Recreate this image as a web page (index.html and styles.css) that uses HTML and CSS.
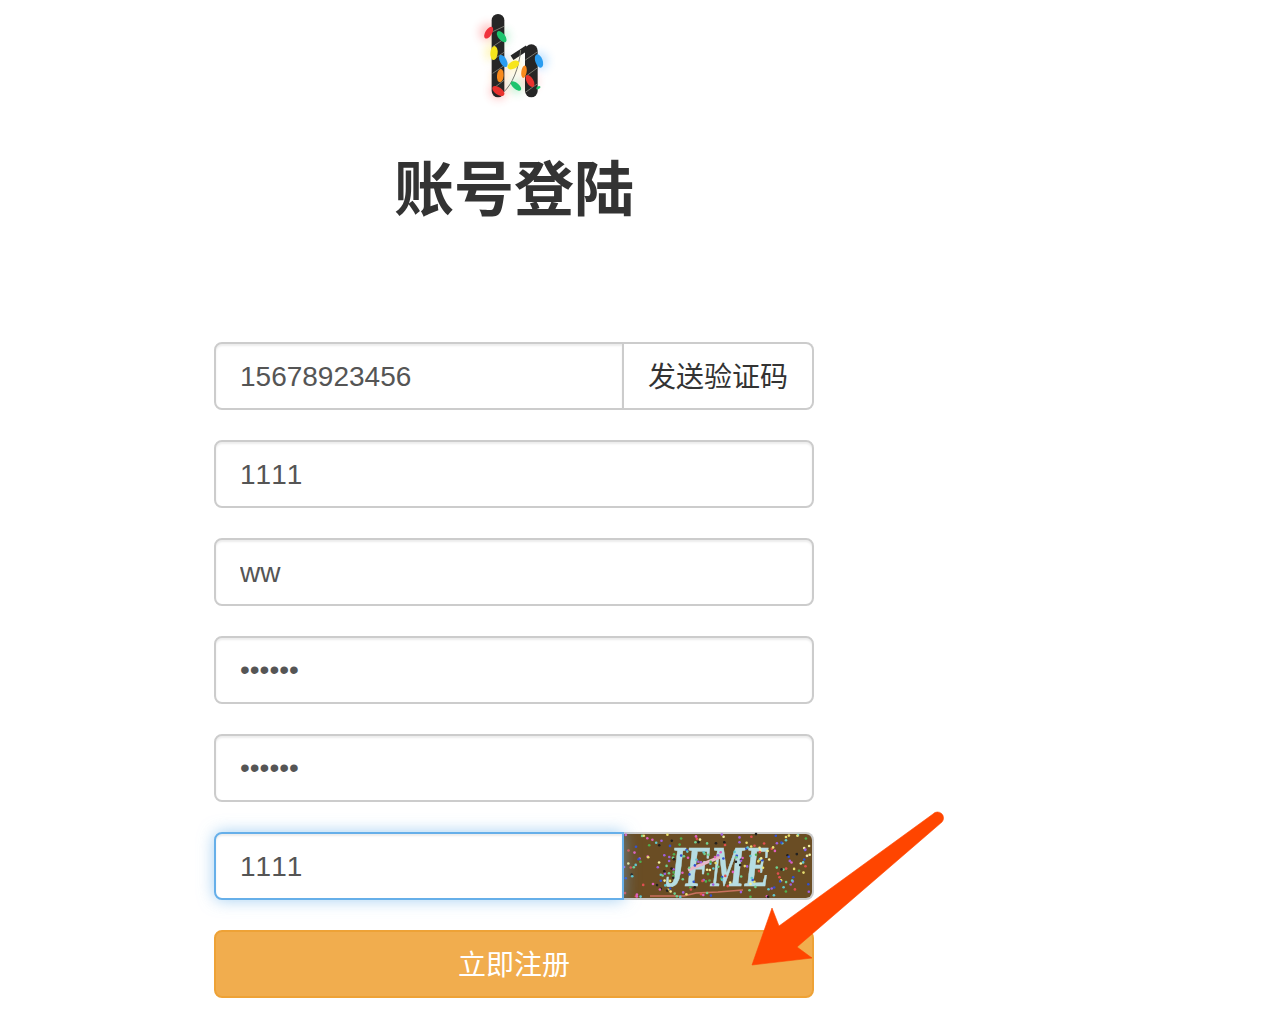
FILE: index.html
```html
<!DOCTYPE html>
<html lang="zh-CN">
<head>
<meta charset="utf-8">
<title>账号登陆</title>
<link rel="stylesheet" href="styles.css">
</head>
<body>
<main class="panel">
  <div class="logo-wrap">
    <svg class="logo" viewBox="0 0 270 315" aria-hidden="true">
      <defs>
        <filter id="glow" x="-50%" y="-50%" width="200%" height="200%"><feGaussianBlur stdDeviation="14"/></filter>
        <filter id="soft" x="-20%" y="-20%" width="140%" height="140%"><feGaussianBlur stdDeviation="2"/></filter>
      </defs>
      <g filter="url(#glow)" opacity=".3">
        <circle cx="55" cy="82" r="26" fill="#ff3030"/><circle cx="95" cy="95" r="22" fill="#20d070"/>
        <circle cx="72" cy="143" r="26" fill="#ffe000"/><circle cx="100" cy="168" r="22" fill="#30a0ff"/>
        <circle cx="90" cy="212" r="22" fill="#ff8a10"/><circle cx="85" cy="258" r="24" fill="#ff3030"/>
        <circle cx="130" cy="180" r="22" fill="#ffe000"/><circle cx="207" cy="168" r="26" fill="#30a0ff"/>
        <circle cx="180" cy="228" r="22" fill="#ff3030"/><circle cx="138" cy="243" r="22" fill="#20d070"/>
      </g>
      <g filter="url(#soft)">
        <path class="logo-bar" d="M84 46V258"/>
        <path class="logo-bar" d="M184 137V258"/>
        <path class="logo-arm" d="M126 158L172 128"/>
        <path class="logo-wire" d="M68 80L102 64M68 125L102 102M68 165L102 142M68 205L102 182M70 250L102 226M152 135C147 190 127 238 100 262M166 165L203 140M166 215L203 188M166 262L203 236"/>
        <ellipse cx="56" cy="83" rx="10" ry="20" transform="rotate(32 56 83)" fill="#f0323c"/>
        <ellipse cx="95" cy="95" rx="10" ry="20" transform="rotate(-38 95 95)" fill="#1fc46d"/>
        <ellipse cx="72" cy="144" rx="11" ry="21" transform="rotate(5 72 144)" fill="#f7e51c"/>
        <ellipse cx="100" cy="168" rx="10" ry="20" transform="rotate(-28 100 168)" fill="#2a9df0"/>
        <ellipse cx="91" cy="212" rx="10" ry="20" transform="rotate(5 91 212)" fill="#f98a1c"/>
        <ellipse cx="85" cy="258" rx="11" ry="21" transform="rotate(-55 85 258)" fill="#e9302f"/>
        <ellipse cx="130" cy="180" rx="11" ry="19" transform="rotate(62 130 180)" fill="#f7e51c"/>
        <ellipse cx="162" cy="200" rx="8" ry="19" transform="rotate(8 162 200)" fill="#f98a1c"/>
        <ellipse cx="207" cy="168" rx="11" ry="21" transform="rotate(-20 207 168)" fill="#2a9df0"/>
        <ellipse cx="180" cy="228" rx="10" ry="20" transform="rotate(-30 180 228)" fill="#e9302f"/>
        <ellipse cx="138" cy="243" rx="9" ry="19" transform="rotate(-50 138 243)" fill="#1fc46d"/>
        <ellipse cx="205" cy="248" rx="4" ry="7" transform="rotate(60 205 248)" fill="#1fc46d"/>
      </g>
    </svg>
  </div>
  <h1 class="title">账号登陆</h1>
  <form class="form">
    <div class="group">
      <input class="field field-joined" type="text" value="15678923456">
      <button class="addon" type="button">发送验证码</button>
    </div>
    <input class="field" type="text" value="1111">
    <input class="field" type="text" value="ww">
    <input class="field field-secret" type="password" value="123456">
    <input class="field field-secret" type="password" value="123456">
    <div class="group">
      <input class="field field-joined is-focused" type="text" value="1111">
      <div class="addon addon-captcha">
        <svg class="captcha" viewBox="0 0 188 64" role="img" aria-label="验证码">
          <defs><filter id="blur"><feGaussianBlur stdDeviation=".5"/></filter></defs>
          <path d="M0 0H182A6 6 0 0 1 188 6V58A6 6 0 0 1 182 64H0Z" fill="#6a4d24"/>
          <g filter="url(#blur)">
            <text class="captcha-text" x="42" y="52" textLength="104" lengthAdjust="spacingAndGlyphs">JFME</text>
            <path d="M64 36L96 23" stroke="#e8b8c8" stroke-width="3" fill="none"/>
            <path d="M26 62L60 62L72 59L94 58L119 56" stroke="#c9705e" stroke-width="1.6" fill="none"/>
            <g id="captcha-dots"></g>
          </g>
        </svg>
      </div>
    </div>
    <button class="submit" type="button">立即注册</button>
  </form>
</main>
<svg class="arrow" viewBox="0 0 1272 1024" aria-hidden="true">
  <path d="M752 965L772 908L779 926L933 814A6 6 0 0 1 942 822L797 947L812 958Z" fill="#ff4500" stroke="#ff4500" stroke-width=".6" stroke-linejoin="round"/>
</svg>
<script src="script.js"></script>
</body>
</html>
```
FILE: styles.css
```css
* {
  box-sizing: border-box;
}

html,
body {
  margin: 0;
  background: #fff;
}

body {
  position: relative;
  height: 1024px;
  overflow: hidden;
  font-family: "Liberation Sans", "Noto Sans CJK SC", sans-serif;
  color: #333;
}

.panel {
  width: 600px;
  margin-left: 214px;
}

.logo-wrap {
  display: flex;
  justify-content: center;
  padding-top: 5px;
  padding-left: 1px;
}

.logo {
  display: block;
  width: 90px;
  height: 105px;
}

.logo-bar {
  fill: none;
  stroke: #262626;
  stroke-width: 38;
  stroke-linecap: round;
}

.logo-arm {
  fill: none;
  stroke: #262626;
  stroke-width: 16;
}

.logo-wire {
  fill: none;
  stroke: #77776f;
  stroke-width: 3;
}

.title {
  margin: 42px 0 124px;
  font-size: 60px;
  line-height: 66px;
  font-weight: 700;
  text-align: center;
  color: #333;
  font-family: "Noto Sans CJK SC", sans-serif;
}

.form {
  display: flex;
  flex-direction: column;
  gap: 30px;
}

.group {
  display: flex;
  height: 68px;
}

.field {
  display: block;
  width: 100%;
  height: 68px;
  padding: 2px 24px 0;
  border: 2px solid #ccc;
  border-radius: 8px;
  background: #fff;
  box-shadow: inset 0 2px 2px rgba(0, 0, 0, .075);
  font: 28px "Liberation Sans", sans-serif;
  font-kerning: none;
  color: #555;
  outline: none;
}

.field-secret {
  padding-top: 0;
}

.field-joined {
  flex: 0 0 410px;
  width: 410px;
  border-top-right-radius: 0;
  border-bottom-right-radius: 0;
}

.is-focused {
  position: relative;
  border-color: #66afe9;
  box-shadow: inset 0 2px 2px rgba(0, 0, 0, .075), 0 0 16px rgba(102, 175, 233, .6);
}

.addon {
  flex: 0 0 190px;
  width: 190px;
  height: 68px;
  padding: 0 24px 2px;
  border: 2px solid #ccc;
  border-left: 0;
  border-radius: 0 8px 8px 0;
  background: #fff;
  font: 28px "Noto Sans CJK SC", sans-serif;
  color: #333;
  white-space: nowrap;
}

.addon-captcha {
  padding: 0;
}

.captcha {
  display: block;
  width: 188px;
  height: 64px;
  overflow: visible;
}

.captcha-text {
  font: italic 700 56px "Liberation Serif", serif;
  fill: #b6dde2;
  stroke: #b6dde2;
  stroke-width: .6;
}

.submit {
  display: block;
  width: 100%;
  height: 68px;
  padding: 0 0 2px;
  border: 2px solid #eea236;
  border-radius: 8px;
  background: #f1ad4e;
  font: 28px "Noto Sans CJK SC", sans-serif;
  color: #fff;
}

.arrow {
  position: absolute;
  inset: 0;
  width: 1272px;
  height: 1024px;
  pointer-events: none;
}
```
FILE: script.js
```js
var host = document.getElementById('captcha-dots');
var colors = ['#e8e070', '#70d090', '#e060c0', '#3050d0', '#60c8d0', '#e05050', '#f0f0a0', '#a060e0', '#202020', '#50b050'];
var seed = 42;
function rnd() {
  seed = (seed * 16807) % 2147483647;
  return seed / 2147483647;
}
for (var i = 0; i < 230; i++) {
  var dot = document.createElementNS('http://www.w3.org/2000/svg', 'circle');
  dot.setAttribute('cx', (rnd() * 186).toFixed(1));
  dot.setAttribute('cy', (rnd() * 63).toFixed(1));
  dot.setAttribute('r', '1.3');
  dot.setAttribute('fill', colors[Math.floor(rnd() * colors.length)]);
  host.appendChild(dot);
}
```
